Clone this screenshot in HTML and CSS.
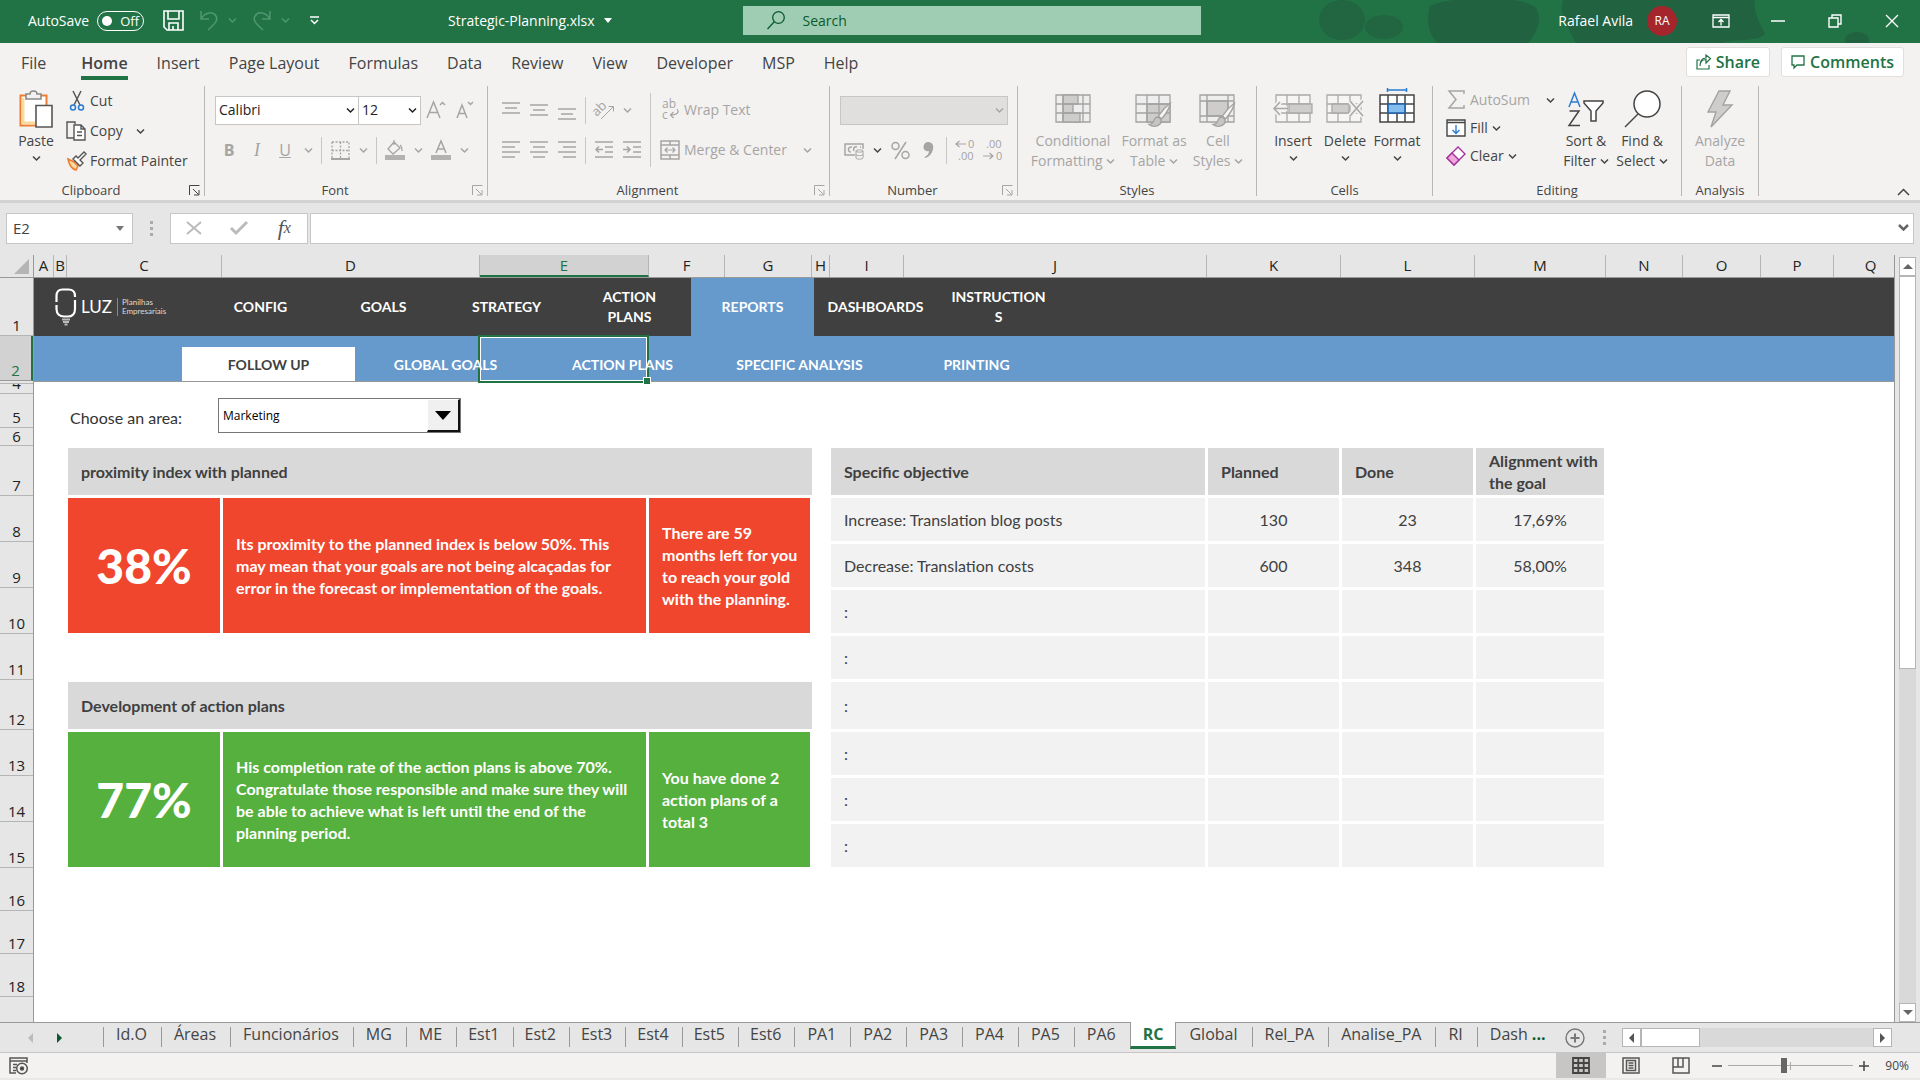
FILE: index.html
```html
<!doctype html>
<html lang="en">
<head>
<meta charset="utf-8">
<title>Strategic-Planning.xlsx</title>
<link rel="stylesheet" href="styles.css">
</head>

<body>
<svg class="defs">
	<symbol id="chev" viewBox="0 0 9 9"><path d="M1 2.500l3.500 3.500L8 2.500" fill="none" stroke="currentColor" stroke-width="1.500"/></symbol>
	<symbol id="launch" viewBox="0 0 11 11"><path d="M.5 10V.5H10.500M4 4l5.500 5.500M10 5v5H5" fill="none" stroke="currentColor"/></symbol>
	<symbol id="brush" viewBox="0 0 24 26"><path d="M22.500 1c-4 3-9.500 9-12 13l3 3C17 13 21.500 6 22.500 1z" fill="#f6f5f4" stroke="#a3a2a1" stroke-width="1.300"/><path d="M10 15c-4 0-4 4-5.500 6-1 1.300-2.500 1.500-3.500 1.500 3 2.500 8.500 2.500 11-.5 1.500-1.500 1.500-3.500.500-5z" fill="#c6c5c3" stroke="#a3a2a1"/></symbol>
</svg>

<header class="title">
	<svg class="art" viewBox="0 0 640 43"><g fill="#216641"><ellipse cx="62" cy="20" rx="23" ry="20"/><ellipse cx="104" cy="27" rx="19" ry="12"/></g><g fill="#216240"><path d="M150 6C170-4 240-6 256 8c8 14-2 28-8 35h-90c-10-8-12-24-8-37z"/><path d="M283 0h192c-2 12 4 22 10 34-8 8-30 5-44 9H296c-6-12-18-30-13-43z"/><ellipse cx="577" cy="40" rx="12" ry="8"/></g></svg>
	<div class="quick">
		<span>AutoSave</span>
		<button class="toggle"><i></i>Off</button>
		<button><svg width="21" height="21" viewBox="0 0 21 21" fill="none" stroke="#fff" stroke-width="1.600"><path d="M1 1h19v19H4l-3-3zM5 1v8h11V1M6 20v-7h9v7M10 16v4"/></svg></button>
		<button class="faint"><svg width="20" height="21" viewBox="0 0 20 21" fill="none" stroke="currentColor" stroke-width="1.500"><path d="M2 1v8h8M2 9C6 2 14 1 17 6c3 5-3 9-8 14"/></svg></button>
		<svg class="chev faint"><use href="#chev"/></svg>
		<button class="faint"><svg width="20" height="21" viewBox="0 0 20 21" fill="none" stroke="currentColor" stroke-width="1.500"><path d="M18 1v8h-8M18 9C14 2 6 1 3 6c-3 5 3 9 8 14"/></svg></button>
		<svg class="chev faint"><use href="#chev"/></svg>
		<button class="more"><svg width="11" height="9" viewBox="0 0 11 9" fill="none" stroke="#fff" stroke-width="1.500"><path d="M1 1h9M2 4l3.500 3.500L9 4"/></svg></button>
	</div>
	<button class="fname">Strategic-Planning.xlsx<i class="down"></i></button>
	<label class="search"><svg width="18" height="19" viewBox="0 0 18 19" fill="none" stroke="#0b5a2e" stroke-width="1.300"><circle cx="11.500" cy="6.500" r="5.800"/><path d="M7.500 10.500L.5 18"/></svg><input type="text" placeholder="Search"></label>
	<div class="user"><span>Rafael Avila</span><b>RA</b></div>
	<div class="win">
		<button><svg width="18" height="14" viewBox="0 0 18 14" fill="none" stroke="#fff" stroke-width="1.300"><path d="M1 1h16v12H1zM1 3.500h16M9 11.500V6M6.500 8L9 5.500 11.500 8"/></svg></button>
		<button><svg width="14" height="14" viewBox="0 0 14 14" stroke="#fff" stroke-width="1.500"><path d="M0 7h14"/></svg></button>
		<button><svg width="14" height="14" viewBox="0 0 14 14" fill="none" stroke="#fff" stroke-width="1.400"><path d="M1 4h9v9H1zM4 4V1h9v9h-3"/></svg></button>
		<button><svg width="14" height="14" viewBox="0 0 14 14" stroke="#fff" stroke-width="1.400"><path d="M1 1l12 12M13 1L1 13"/></svg></button>
	</div>
</header>

<nav class="menu">
	<a href="#" class="file">File</a>
	<a href="#" class="on">Home</a>
	<a href="#">Insert</a>
	<a href="#">Page Layout</a>
	<a href="#">Formulas</a>
	<a href="#">Data</a>
	<a href="#">Review</a>
	<a href="#">View</a>
	<a href="#">Developer</a>
	<a href="#">MSP</a>
	<a href="#">Help</a>
	<div class="menu-btn">
		<button><svg width="15" height="16" viewBox="0 0 15 16" fill="none" stroke="#217346" stroke-width="1.200"><path d="M4 6H1v9h12v-4M4 12c0-5 3-6.500 6-6.500V9l4.500-4.500L10 1v3C6 4 4 7 4 12z"/></svg>Share</button>
		<button><svg width="14" height="14" viewBox="0 0 14 14" fill="none" stroke="#217346" stroke-width="1.300"><path d="M1 1h12v9H6l-3 3v-3H1z"/></svg>Comments</button>
	</div>
</nav>

<div class="ribbon">
	<section class="group g-clip">
		<div class="tools">
			<button class="big"><svg width="34" height="38" viewBox="0 0 34 38" fill="none"><path d="M1.500 5.500h26v30h-26z" fill="#fff" stroke="#ed7d31" stroke-width="2"/><path d="M4 8v25h21" stroke="#fbd9a0" stroke-width="3"/><path d="M7 9V4h4c0-4 7-4 7 0h4v5z" fill="#f3f2f1" stroke="#8a8a8a" stroke-width="1.600"/><path d="M17 15.500h16v21.500H17z" fill="#fff" stroke="#555" stroke-width="1.600"/></svg><span>Paste</span><svg class="chev"><use href="#chev"/></svg></button>
			<div class="lines">
				<button><svg width="20" height="20" viewBox="0 0 20 20" fill="none"><path d="M4 0l7 14M12 0L5 14" stroke="#555" stroke-width="1.500"/><circle cx="4" cy="16.500" r="2.500" stroke="#2b7cd3" stroke-width="1.500"/><circle cx="12" cy="16.500" r="2.500" stroke="#2b7cd3" stroke-width="1.500"/></svg>Cut</button>
				<button><svg width="20" height="20" viewBox="0 0 20 20" fill="none" stroke="#555" stroke-width="1.400"><path d="M6 17H-2V1h8v2"/><path d="M5 4h7l4 4v11H5zM12 4v4h4M8 11h5M8 14.500h5" fill="#fff"/></svg>Copy<svg class="chev wide"><use href="#chev"/></svg></button>
				<button><svg width="20" height="20" viewBox="0 0 20 20" fill="none"><path d="M-1 8l6 3 4 4-2 4C3 18 0 13-1 8z" fill="#fbd9a0" stroke="#ed7d31" stroke-width="1.600"/><path d="M4 8l7 7 3-3-3-3 6-6-2-2-6 6-2-2z" fill="#fff" stroke="#555" stroke-width="1.400"/></svg>Format Painter</button>
			</div>
		</div>
		<footer class="more">Clipboard<svg class="launch"><use href="#launch"/></svg></footer>
	</section>

	<section class="group g-font off">
		<div class="tools stack">
			<div class="row">
				<label class="box face"><select><option>Calibri</option></select><svg class="chev"><use href="#chev"/></svg></label>
				<label class="box size"><select><option>12</option></select><svg class="chev"><use href="#chev"/></svg></label>
				<button class="w30"><svg width="20" height="20" viewBox="0 0 20 20" fill="none" stroke="currentColor" stroke-width="1.500"><path d="M1 18L7.500 2 14 18M3 12.500h9M14 5l2.500-2.500L19 5"/></svg></button>
				<button class="w28"><svg width="18" height="20" viewBox="0 0 18 20" fill="none" stroke="currentColor" stroke-width="1.500"><path d="M1 18L6 5l5 13M3 13.500h6M12 2l2.500 2.500L17 2"/></svg></button>
			</div>
			<div class="row">
				<button class="w28 b">B</button>
				<button class="w28 i">I</button>
				<button class="w28 u">U</button>
				<button class="w18"><svg class="chev"><use href="#chev"/></svg></button>
				<i class="sep"></i>
				<button class="w28"><svg width="19" height="19" viewBox="0 0 19 19" fill="none" stroke="currentColor" stroke-width="1.300"><path d="M1 1h17v17M1 1v17M9.500 1v16M1 9.500h17" stroke-dasharray="2 1.500"/><path d="M0 18h19" stroke-width="2"/></svg></button>
				<button class="w18"><svg class="chev"><use href="#chev"/></svg></button>
				<i class="sep"></i>
				<button class="w28"><svg width="20" height="20" viewBox="0 0 20 20" fill="none" stroke="currentColor" stroke-width="1.300"><path d="M9 2l6 6-7 6-5-5zM9 5V0M15 5c2 1 2 4 2 6"/><path d="M0 17.500h20" stroke="#b3b2b1" stroke-width="5"/></svg></button>
				<button class="w18"><svg class="chev"><use href="#chev"/></svg></button>
				<button class="w28"><svg width="20" height="20" viewBox="0 0 20 20" fill="none" stroke="currentColor" stroke-width="1.500"><path d="M5 13l5-12 5 12M6.500 9h7"/><path d="M0 17.500h20" stroke="#b3b2b1" stroke-width="5"/></svg></button>
				<button class="w18"><svg class="chev"><use href="#chev"/></svg></button>
			</div>
		</div>
		<footer class="more">Font<svg class="launch"><use href="#launch"/></svg></footer>
	</section>

	<section class="group g-align off">
		<div class="tools">
			<div class="stack">
				<div class="row">
					<button class="w28"><svg width="18" height="20" viewBox="0 0 18 20" stroke="currentColor" stroke-width="1.500"><path d="M0 3h18M3 8h12M0 13h18"/></svg></button>
					<button class="w28"><svg width="18" height="20" viewBox="0 0 18 20" stroke="currentColor" stroke-width="1.500"><path d="M0 5h18M3 10h12M0 15h18"/></svg></button>
					<button class="w28"><svg width="18" height="20" viewBox="0 0 18 20" stroke="currentColor" stroke-width="1.500"><path d="M0 9h18M3 14h12M0 19h18"/></svg></button>
					<i class="sep"></i>
					<button class="w28"><svg width="20" height="20" viewBox="0 0 20 20"><text x="-1" y="12" font-size="13" fill="currentColor" transform="rotate(-45 7 10)">ab</text><path d="M7 19L19 7M14.500 6.500H19.500V11.500" fill="none" stroke="currentColor"/></svg></button>
					<button class="w18"><svg class="chev"><use href="#chev"/></svg></button>
				</div>
				<div class="row">
					<button class="w28"><svg width="18" height="18" viewBox="0 0 18 18" stroke="currentColor" stroke-width="1.500"><path d="M0 1h18M0 6h13M0 11h18M0 16h13"/></svg></button>
					<button class="w28"><svg width="18" height="18" viewBox="0 0 18 18" stroke="currentColor" stroke-width="1.500"><path d="M0 1h18M3 6h12M0 11h18M3 16h12"/></svg></button>
					<button class="w28"><svg width="18" height="18" viewBox="0 0 18 18" stroke="currentColor" stroke-width="1.500"><path d="M0 1h18M5 6h13M0 11h18M5 16h13"/></svg></button>
					<i class="sep"></i>
					<button class="w28"><svg width="18" height="18" viewBox="0 0 18 18" fill="none" stroke="currentColor" stroke-width="1.500"><path d="M0 1h18M10 6h8M10 11h8M0 16h18M8 8.500H1M4 5.500l-3 3 3 3"/></svg></button>
					<button class="w28"><svg width="18" height="18" viewBox="0 0 18 18" fill="none" stroke="currentColor" stroke-width="1.500"><path d="M0 1h18M10 6h8M10 11h8M0 16h18M0 8.500h7M4 5.500l3 3-3 3"/></svg></button>
				</div>
			</div>
			<i class="sep tall"></i>
			<div class="stack wrap">
				<button class="line"><svg width="20" height="20" viewBox="0 0 20 20" font-size="12" fill="currentColor"><text x="2" y="8">ab</text><text x="2" y="19">c</text><path d="M17 9c3 4-1 6-6 6M13.500 12l-3 3 3 3" fill="none" stroke="currentColor" stroke-width="1.200"/></svg>Wrap Text</button>
				<button class="line"><svg width="20" height="20" viewBox="0 0 20 20" fill="none" stroke="currentColor" stroke-width="1.500"><path d="M1 1h18v18H1zM1 5h18M1 15h18M10 1v4M10 15v4"/><path d="M5 10h10M7.500 7.500L5 10l2.500 2.500M12.500 7.500L15 10l-2.500 2.500" stroke-width="1.200"/></svg>Merge &amp; Center<svg class="chev wide"><use href="#chev"/></svg></button>
			</div>
		</div>
		<footer class="more">Alignment<svg class="launch"><use href="#launch"/></svg></footer>
	</section>

	<section class="group g-num off">
		<div class="tools stack">
			<div class="row"><label class="box numfmt"><select disabled><option></option></select><svg class="chev"><use href="#chev"/></svg></label></div>
			<div class="row">
				<button class="w28"><svg width="20" height="20" viewBox="0 0 20 20" fill="none" stroke="currentColor" stroke-width="1.500"><path d="M11 15H1V4h18v5M8 7c-4-1-5 5-1 5M13 7c-3-1-4 2-3 4M16 7h1"/><path d="M12 11v7c0 1.500 7 1.500 7 0v-7c0-1.500-7-1.500-7 0c0 1.500 7 1.500 7 0M12 14.500c0 1.500 7 1.500 7 0" fill="#f3f2f1" stroke-width="1"/></svg></button>
				<button class="w18 dark"><svg class="chev"><use href="#chev"/></svg></button>
				<button class="w28 pct"><svg width="19" height="19" viewBox="0 0 19 19" fill="none" stroke="currentColor" stroke-width="1.500"><circle cx="4.500" cy="5" r="3.500"/><circle cx="14.500" cy="14" r="3.500"/><path d="M15 1L4 18"/></svg></button>
				<button class="w28"><svg width="11" height="17" viewBox="0 0 11 17"><path d="M5 0c4 0 6 3 5 7-1 5-4 8-8 9l-.5-1c3-1.500 4.500-3.500 4.500-6C2.500 10 .500 7.500.500 5 .500 2 2.500 0 5 0z" fill="currentColor"/></svg></button>
				<i class="sep"></i>
				<button class="w28"><svg width="20" height="20" viewBox="0 0 20 20"><g font-size="11" fill="currentColor"><text x="13" y="8">0</text><text x="3" y="20">.00</text></g><path d="M11 4H1M4.500 1L1 4l3.500 3" fill="none" stroke="currentColor" stroke-width="1.200"/></svg></button>
				<button class="w28"><svg width="20" height="20" viewBox="0 0 20 20"><g font-size="11" fill="currentColor"><text x="3" y="8">.00</text><text x="13" y="20">0</text></g><path d="M0 16h10M6.500 13l3.500 3-3.500 3" fill="none" stroke="currentColor" stroke-width="1.200"/></svg></button>
			</div>
		</div>
		<footer class="more">Number<svg class="launch"><use href="#launch"/></svg></footer>
	</section>

	<section class="group g-style off">
		<div class="tools">
			<button class="big w88"><svg width="36" height="38" viewBox="0 0 36 38" fill="none" stroke="#a3a2a1" stroke-width="1.300"><path d="M1 5h34v27H1z" fill="#eee"/><path d="M8 5h15v9H8zM8 14h10v9H8zM8 23h17v9H8z" fill="#cfcdcb"/><path d="M1 14h34M1 23h34M8 5v27M28 5v27"/></svg><span>Conditional<br>Formatting <svg class="chev"><use href="#chev"/></svg></span></button>
			<button class="big w74"><svg width="40" height="38" viewBox="0 0 40 38" fill="none" stroke="#a3a2a1" stroke-width="1.300"><path d="M2 5h34v27H2z" fill="#eee"/><path d="M13 14h23v18H13z" fill="#cfcdcb"/><path d="M2 14h34M2 23h34M13 5v27M25 5v27"/><use href="#brush" x="13" y="12" width="26" height="26"/></svg><span>Format as<br>Table <svg class="chev"><use href="#chev"/></svg></span></button>
			<button class="big w54"><svg width="40" height="38" viewBox="0 0 40 38" fill="none" stroke="#a3a2a1" stroke-width="1.300"><path d="M2 5h34v27H2z" fill="#eee"/><path d="M9 11h21v15H9z" fill="#cfcdcb"/><path d="M2 11h34M2 26h34M9 5v27M30 5v27"/><use href="#brush" x="13" y="12" width="26" height="26"/></svg><span>Cell<br>Styles <svg class="chev"><use href="#chev"/></svg></span></button>
		</div>
		<footer>Styles</footer>
	</section>

	<section class="group g-cells">
		<div class="tools">
			<button class="big w52"><svg width="40" height="38" viewBox="0 0 40 38" fill="none" stroke="#aaa9a8" stroke-width="1.300"><path d="M3 5h34v27H3zM14 5v27M26 5v27M3 14h34M3 23h34" fill="#f6f5f4"/><path d="M16 14h23v9H16z" fill="#cfcdcb"/><path d="M1 18.500h13M7 12l-6 6.500L7 25" stroke="#f3f2f1" stroke-width="5"/><path d="M1 18.500h14M7 12l-6 6.500L7 25" stroke-width="1.600"/></svg><span>Insert</span><svg class="chev"><use href="#chev"/></svg></button>
			<button class="big w52"><svg width="38" height="38" viewBox="0 0 38 38" fill="none" stroke="#aaa9a8" stroke-width="1.300"><path d="M1 5h34v27H1zM12 5v27M24 5v27M1 14h34M1 23h34" fill="#f6f5f4"/><path d="M6 14h17v9H6z" fill="#cfcdcb"/><path d="M24 11l13 15M37 11L24 26" stroke="#f3f2f1" stroke-width="5"/><path d="M24 11l13 15M37 11L24 26" stroke-width="1.600"/></svg><span>Delete</span><svg class="chev"><use href="#chev"/></svg></button>
			<button class="big w52"><svg width="36" height="38" viewBox="0 0 36 38" fill="none"><path d="M1 5h34v27H1zM9 5v27M26 5v27M1 14h34M1 23h34M18 5v27" fill="#fff" stroke="#444" stroke-width="1.500"/><path d="M9 14h17v9H9z" fill="#83beec" stroke="#1e62b0" stroke-width="1.600"/><path d="M8.500 0h19M8.500-2v4M27.500-2v4" stroke="#2b7cd3" stroke-width="1.500"/></svg><span>Format</span><svg class="chev"><use href="#chev"/></svg></button>
		</div>
		<footer>Cells</footer>
	</section>

	<section class="group g-edit">
		<div class="tools">
			<div class="lines tight">
				<button class="dis"><svg width="20" height="20" viewBox="0 0 20 20" fill="none" stroke="currentColor" stroke-width="1.500"><path d="M18 4V1H3l7 8.500L3 18h15v-3"/></svg>AutoSum<svg class="chev wide dark"><use href="#chev"/></svg></button>
				<button><svg width="20" height="18" viewBox="0 0 20 18" fill="none" stroke="#444" stroke-width="1.400"><path d="M1 1h18v16H1zM1 3.500h18" fill="#fff"/><path d="M10 6v8M6.500 11l3.500 3.500 3.500-3.500" stroke="#2b7cd3"/></svg>Fill <svg class="chev"><use href="#chev"/></svg></button>
				<button><svg width="20" height="20" viewBox="0 0 20 20" fill="none" stroke="#a3309c" stroke-width="1.400"><path d="M12 1l7 7L8 19l-7-7z" fill="#fff"/><path d="M6 7l7 7-5 5-7-7z" fill="#f0a8dc"/></svg>Clear <svg class="chev"><use href="#chev"/></svg></button>
			</div>
			<button class="big w56"><svg width="38" height="38" viewBox="0 0 38 38" fill="none" stroke="#444" stroke-width="1.500"><path d="M2 17L7.500 3 13 17M4 12h7" stroke="#2b7cd3"/><path d="M2.500 21h9.500L2 35.500h11"/><path d="M17 11h19v2l-7 8v10h-5V21l-7-8z" fill="#fff"/></svg><span>Sort &amp;<br>Filter <svg class="chev"><use href="#chev"/></svg></span></button>
			<button class="big w56"><svg width="38" height="38" viewBox="0 0 38 38" fill="none" stroke="#444" stroke-width="1.500"><circle cx="24" cy="14" r="13" fill="#fff"/><path d="M15 24L2 37"/></svg><span>Find &amp;<br>Select <svg class="chev"><use href="#chev"/></svg></span></button>
		</div>
		<footer>Editing</footer>
	</section>

	<section class="group g-ana off">
		<div class="tools">
			<button class="big"><svg width="28" height="38" viewBox="0 0 28 38"><path d="M13 1h11l-7 14h9L5 37l5-15H2z" fill="#cfcdcb" stroke="#a3a2a1" stroke-width="1.400"/></svg><span>Analyze<br>Data</span></button>
		</div>
		<footer>Analysis</footer>
	</section>
	<button class="collapse"><svg width="13" height="8" viewBox="0 0 13 8" fill="none" stroke="#444" stroke-width="1.500"><path d="M1 7l5.500-5.500L12 7"/></svg></button>
</div>

<div class="fbar">
	<label class="namebox"><input type="text" value="E2" aria-label="Name box"><i class="down"></i></label>
	<i class="grip"></i>
	<div class="fx">
		<button><svg width="16" height="14" viewBox="0 0 16 14" stroke="#bcbbba" stroke-width="2"><path d="M1 1l14 12M15 1L1 13"/></svg></button>
		<button><svg width="18" height="14" viewBox="0 0 18 14" fill="none" stroke="#bcbbba" stroke-width="3"><path d="M1 7l5 5L17 1"/></svg></button>
		<button class="fn"><i>f</i><small>x</small></button>
	</div>
	<label class="formula"><input type="text" aria-label="Formula"><svg width="11" height="8" viewBox="0 0 11 8" fill="none" stroke="#666" stroke-width="2.500"><path d="M1 1l4.500 4.500L10 1"/></svg></label>
</div>

<main class="work">
	<div class="rows">
		<div class="corner"><i></i></div>
		<div class="r1">1</div>
		<div class="r2 sel">2</div>
		<div class="r3"></div>
		<div class="r4"><span>4</span></div>
		<div class="r5">5</div>
		<div class="r6">6</div>
		<div class="r7">7</div>
		<div>8</div>
		<div>9</div>
		<div>10</div>
		<div>11</div>
		<div class="r7">12</div>
		<div>13</div>
		<div>14</div>
		<div>15</div>
		<div class="r16">16</div>
		<div class="r16">17</div>
		<div class="r16">18</div>
	</div>
	<div class="sheet">
		<div class="cols">
			<span class="ca">A</span><span class="cb">B</span><span class="cc">C</span><span class="cd">D</span><span class="ce sel">E</span><span class="cf">F</span><span class="cg">G</span><span class="ch">H</span><span class="ci">I</span><span class="cj">J</span><span class="ck">K</span><span class="ck">L</span><span class="cm">M</span><span class="cn">N</span><span class="co">O</span><span class="cp">P</span><span class="cq">Q</span>
		</div>
		<div class="cells">
			<nav class="top">
				<div class="logo">
					<svg width="22" height="38" viewBox="0 0 22 38" fill="none" stroke="#fff" stroke-width="2.200"><path d="M1.500 14V8c0-4 2-6.500 6-6.500h6c4 0 6.500 2.500 6.500 6.500v1M20 12v9c0 5-3 7.500-7 7.500H9c-4 0-7.500-2.500-7.500-7.500v-4"/><path d="M7 31.500h8M8 34h6M9.500 36.500h3" stroke="#bbb"/></svg>
					<b>LUZ</b>
					<small>Planilhas<br>Empresariais</small>
				</div>
				<a href="#">CONFIG</a>
				<a href="#">GOALS</a>
				<a href="#">STRATEGY</a>
				<a href="#">ACTION PLANS</a>
				<a href="#" class="on">REPORTS</a>
				<a href="#">DASHBOARDS</a>
				<a href="#">INSTRUCTIONS</a>
			</nav>
			<nav class="sub">
				<i class="cursor"></i>
				<a href="#" class="on">FOLLOW UP</a>
				<a href="#">GLOBAL GOALS</a>
				<a href="#">ACTION PLANS</a>
				<a href="#">SPECIFIC ANALYSIS</a>
				<a href="#">PRINTING</a>
			</nav>
			<div class="area">
				<label for="area">Choose an area:</label>
				<div class="combo"><select id="area"><option>Marketing</option></select><i></i></div>
			</div>
			<div class="report">
				<div class="left">
					<section class="card red">
						<h2>proximity index with planned</h2>
						<div class="tiles">
							<strong>38%</strong>
							<p>Its proximity to the planned index is below 50%. This may mean that your goals are not being alcaçadas for error in the forecast or implementation of the goals.</p>
							<p>There are 59 months left for you to reach your gold with the planning.</p>
						</div>
					</section>
					<section class="card green">
						<h2>Development of action plans</h2>
						<div class="tiles">
							<strong>77%</strong>
							<p>His completion rate of the action plans is above 70%. Congratulate those responsible and make sure they will be able to achieve what is left until the end of the planning period.</p>
							<p>You have done 2 action plans of a total 3</p>
						</div>
					</section>
				</div>
				<table>
					<thead>
						<tr><th class="obj">Specific objective</th><th class="num">Planned</th><th class="num">Done</th><th class="ali">Alignment with the goal</th></tr>
					</thead>
					<tbody>
						<tr><td>Increase: Translation blog posts</td><td>130</td><td>23</td><td>17,69%</td></tr>
						<tr><td>Decrease: Translation costs</td><td>600</td><td>348</td><td>58,00%</td></tr>
						<tr><td>:</td><td></td><td></td><td></td></tr>
						<tr><td>:</td><td></td><td></td><td></td></tr>
						<tr class="high"><td>:</td><td></td><td></td><td></td></tr>
						<tr><td>:</td><td></td><td></td><td></td></tr>
						<tr><td>:</td><td></td><td></td><td></td></tr>
						<tr><td>:</td><td></td><td></td><td></td></tr>
					</tbody>
				</table>
			</div>
		</div>
	</div>
	<div class="vscroll">
		<button><i class="up"></i></button>
		<div class="track"><i></i></div>
		<button><i class="down"></i></button>
	</div>
</main>

<div class="tabs">
	<div class="arrows"><i class="prev"></i><i class="next"></i></div>
	<a href="#">Id.O</a>
	<a href="#">Áreas</a>
	<a href="#">Funcionários</a>
	<a href="#">MG</a>
	<a href="#">ME</a>
	<a href="#" class="est">Est1</a>
	<a href="#" class="est">Est2</a>
	<a href="#" class="est">Est3</a>
	<a href="#" class="est">Est4</a>
	<a href="#" class="est">Est5</a>
	<a href="#" class="est">Est6</a>
	<a href="#">PA1</a>
	<a href="#">PA2</a>
	<a href="#">PA3</a>
	<a href="#">PA4</a>
	<a href="#">PA5</a>
	<a href="#">PA6</a>
	<a href="#" class="on">RC</a>
	<a href="#" class="first">Global</a>
	<a href="#">Rel_PA</a>
	<a href="#">Analise_PA</a>
	<a href="#">RI</a>
	<a href="#" class="last">Dash <b>...</b></a>
	<div class="tabs-end">
		<button class="add"><svg width="20" height="20" viewBox="0 0 20 20" fill="none" stroke="#777" stroke-width="1.400"><circle cx="10" cy="10" r="9"/><path d="M10 5.500v9M5.500 10h9" stroke-width="2"/></svg></button>
		<i class="grip"></i>
		<div class="hscroll">
			<button><i class="prev"></i></button>
			<div class="track"><i></i></div>
			<button><i class="next"></i></button>
		</div>
	</div>
</div>

<footer class="status">
	<button class="macro"><svg width="20" height="18" viewBox="0 0 20 18" fill="none" stroke="#555" stroke-width="1.500"><path d="M7 16H1V1h17v5M1 4h17M4 7.500h4M4 10.500h3M4 13.500h3"/><circle cx="13" cy="11.500" r="5.300"/><circle cx="13" cy="11.500" r="1.500" fill="#333"/></svg></button>
	<div class="views">
		<button class="on"><svg width="18" height="17" viewBox="0 0 18 17" fill="none" stroke="#444" stroke-width="1.800"><path d="M1 1h16v15H1zM1 6h16M1 11h16M6.300 1v15M11.700 1v15"/></svg></button>
		<button><svg width="18" height="17" viewBox="0 0 18 17" fill="none" stroke="#555" stroke-width="1.500"><path d="M1 1h16v15H1zM4.500 3.500h9v10h-9zM6.500 6h5M6.500 8.500h5M6.500 11h5"/></svg></button>
		<button><svg width="18" height="17" viewBox="0 0 18 17" fill="none" stroke="#555" stroke-width="1.500"><path d="M1 1h16v15H1zM1 10h10V1M6 1v9"/></svg></button>
	</div>
	<div class="zoom">
		<button><svg width="10" height="10" viewBox="0 0 10 10" stroke="#444" stroke-width="1.500"><path d="M0 5h10"/></svg></button>
		<input type="range" min="10" max="190" value="89" aria-label="Zoom">
		<button><svg width="10" height="10" viewBox="0 0 10 10" stroke="#444" stroke-width="1.500"><path d="M0 5h10M5 0v10"/></svg></button>
		<span>90%</span>
	</div>
</footer>
</body>
</html>
```
FILE: styles.css
```css
*{padding: 0; margin:0; box-sizing: border-box;}
html,body{height:100%;}
body{display: flex; flex-direction: column; background:#e6e6e6; color:#444; font:14px/20px "Open Sans","Noto Sans",sans-serif; overflow: hidden;}
a{color:inherit; text-decoration: none;}
button{border:0; background:none; font:inherit; color:inherit; display: flex; align-items: center; justify-content: center;}
input,select{border:0; background:none; font:inherit; color:inherit; outline:0; appearance:none; min-width:0;}
svg{flex:none; overflow: visible;}
.defs{position: absolute; width:0; height:0;}
.chev{width:9px; height:9px;}

/* triangles */
.down,.up,.prev,.next{width:0; height:0; border:5px solid transparent; flex:none;}
.down{border-top-color:currentColor; border-bottom:0;}
.up{border-bottom-color:currentColor; border-top:0;}
.prev{border-right-color:currentColor; border-left:0;}
.next{border-left-color:currentColor; border-right:0;}

/* title bar */
.title{position: relative; flex:none; display: flex; align-items: center; height:43px; padding-bottom:2px; background:#217346; color:#fff;}
.title>*{z-index:1;}
.title .art{position: absolute; right:0; top:0; z-index:0; width:640px; height:43px; overflow: hidden;}
.quick{display: flex; align-items: center; width:448px; padding-left:28px;}
.toggle{width:47px; height:20px; margin:0 19px 0 8px; border:1px solid #fff; border-radius:10px; font-size:13px; gap:8px;}
.toggle i{width:10px; height:10px; border-radius:50%; background:#fff;}
.quick .faint{color:#4f9671;}
.quick button.faint{margin-left:15px;}
.quick svg.faint{margin-left:9px;}
.quick .more{margin-left:19px;}
.fname{gap:9px;}
.fname .down{border-width:4px; border-top-width:5px; border-bottom:0;}
.search{display: flex; align-items: center; width:458px; height:29px; margin-left:131px; padding-left:24px; background:#9fcdb3; color:#0b5a2e; gap:18px;}
.search input::placeholder{color:#0b5a2e; opacity:1;}
.user{display: flex; align-items: center; margin-left:auto; gap:14px;}
.user b{width:30px; height:30px; border-radius:50%; background:#a4262c; font-weight:400; font-size:12px; line-height:30px; text-align: center;}
.win{display: flex; margin-left:15px;}
.win button{width:57px; height:40px;}

/* menu */
.menu{flex:none; display: flex; align-items: center; height:42px; padding:0 16px 4px 21px; background:#f3f2f1; gap:29px; font-size:16px;}
.menu a{line-height:26px; padding:5px 0 4px; height:35px;}
.menu .file{margin-right:6px;}
.menu .on{font-weight:600; border-bottom:4px solid #217346;}
.menu-btn{display: flex; margin-left:auto; gap:11px;}
.menu-btn button{height:30px; padding:0 9px; gap:5px; background:#fff; border:1px solid #e1dfdd; border-radius:3px; color:#217346; font-weight:600;}

/* ribbon */
.ribbon{flex:none; display: flex; height:118px; padding:1px 0 4px; background:#f3f2f1; border-bottom:3px solid #d4d2d0;}
.group{flex:none; display: flex; flex-direction: column; justify-content: space-between; border-right:1px solid #b9b7b5;}
.group footer{position: relative; height:16px; line-height:20px; font-size:13px; text-align: center;}
.group .more{padding-right:22px;}
.launch{position: absolute; right:4px; top:5px; width:11px; height:11px;}
.off .tools,.off .launch,.dis{color:#a6a5a4;}
.dark{color:#444;}
.tools{display: flex;}
.stack{display: flex; flex-direction: column; padding-top:4px;}
.row,.line{display: flex; align-items: center; justify-content: flex-start; height:40px;}
.big{flex-direction: column; justify-content: flex-start; padding-top:4px;}
.big span{margin-top:3px; white-space: nowrap;}
.big>.chev{margin-top:3px;}
.lines button{justify-content: flex-start; height:30px; gap:1px;}
.chev.wide{margin-left:12px;}
.w18{width:18px;}
.w28{width:28px;}
.w30{width:30px;}
.w52{width:52px;}
.w54{width:54px;}
.w56{width:56px;}
.w74{width:74px;}
.w88{width:88px;}
.sep{width:1px; height:27px; margin:0 4px; background:#c8c6c4;}
.sep.tall{height:74px; margin:7px 9px 0 4px;}
.b{font-weight:700; font-size:16px;}
.i{font-family:"Liberation Serif",serif; font-style: italic; font-size:18px;}
.u{text-decoration: underline; font-size:16px;}
.box{display: flex; align-items: center; height:29px; padding:0 3px; border:1px solid #c8c6c4; background:#fff; color:#222;}
.box select{flex:1;}
.face{width:144px;}
.size{width:62px; border-left:0;}
.numfmt{width:168px; background:#e1dfdd; color:#a6a5a4;}

.g-clip{width:205px;}
.g-clip .tools{padding-left:17px;}
.g-clip .tools .big{width:38px;}
.g-clip .lines{margin-left:14px;}
.g-font{width:283px;}
.g-font .tools{padding-left:10px;}
.g-align{width:342px;}
.g-align .tools{padding-left:9px;}
.g-align .line{gap:4px;}
.g-num{width:188px;}
.g-num .tools{padding-left:10px;}
.g-style{width:239px;}
.g-style .tools{padding-left:11px;}
.g-cells{width:176px;}
.g-cells .tools{padding-left:10px;}
.g-edit{width:249px;}
.g-edit .tools{padding-left:13px;}
.g-edit .lines{width:112px;}
.g-edit .lines button{height:28px; gap:4px;}
.g-ana{width:77px;}
.g-ana .tools{justify-content: center;}
.g-ana footer{white-space: nowrap;}
.collapse{margin:auto 10px 0 auto;}

/* formula bar */
.fbar{flex:none; display: flex; align-items: center; height:52px; padding:0 6px 2px;}
.fbar>label,.fx{height:31px; background:#fff; border:1px solid #c6c6c6; display: flex; align-items: center;}
.namebox{width:127px; padding:0 8px 0 6px; font-size:15px;}
.namebox input{flex:1;}
.namebox .down{border-width:4px; border-top-width:5px; border-bottom:0; color:#777;}
.grip{width:3px; height:15px; background:repeating-linear-gradient(#aaa 0 3px,transparent 3px 6px);}
.fbar .grip{margin:0 17px;}
.fx{width:138px; margin-right:2px;}
.fx button{flex:1;}
.fn{font-family:"Liberation Serif",serif; font-style: italic; color:#555;}
.fn i{font-size:22px;}
.fn small{font-size:16px;}
.formula{flex:1; padding-right:4px;}
.formula input{flex:1;}

/* sheet */
.work{flex:1; min-height:0; display: flex; border-bottom:1px solid #999;}
.rows{flex:none; width:34px; border-right:1px solid #999; overflow: hidden; color:#222; font-size:15px;}
.rows div{display: flex; align-items: flex-end; justify-content: center; height:46px; line-height:20px; border-bottom:1px solid #b5b5b5;}
.rows .corner{height:23px; justify-content: flex-end; padding:0 4px 3px 0; border-bottom-color:#999;}
.corner i{width:0; height:0; border-left:15px solid transparent; border-bottom:15px solid #b5b5b5;}
.rows .r1{height:58px;}
.rows .r2{height:45px; border-bottom-color:#999;}
.rows .sel{background:#d2d2d2; color:#217346; border-right:2px solid #217346;}
.rows .r3{height:3px;}
.rows .r4{height:10px; overflow: hidden;}
.rows .r5{height:34px;}
.rows .r6{height:18px; line-height:18px;}
.rows .r7{height:50px;}
.rows .r16{height:43px;}
.sheet{flex:1; min-width:0; display: flex; flex-direction: column; overflow: hidden; border-right:1px solid #999;}
.cols{flex:none; display: flex; height:23px; border-bottom:1px solid #999; color:#222; font-size:15px; line-height:20px; text-align: center;}
.cols span{flex:none; border-right:1px solid #b5b5b5;}
.cols .sel{background:#d2d2d2; color:#217346; border-bottom:2px solid #217346;}
.ca{width:20px;} .cb{width:13px;} .cc{width:155px;} .cd{width:258px;} .ce{width:169px;} .cf{width:76px;}
.cg{width:87px;} .ch{width:18px;} .ci{width:74px;} .cj{width:303px;} .ck{width:134px;} .cm{width:131px;}
.cn{width:77px;} .co{width:78px;} .cp{width:73px;} .cq{width:74px;}
.cells{flex:1; min-height:0; background:#fff; overflow: hidden; font-family:Lato,"Noto Sans",sans-serif; font-size:16px; line-height:22px;}
.top{display: flex; height:58px; background:#404040; color:#fff; font-weight:700; font-size:14px; line-height:20px;}
.top a{display: flex; align-items: center; justify-content: center; width:123px; padding:0 13px; text-align: center; word-break: break-word;}
.top .on{background:#6699cc;}
.logo{display: flex; align-items: center; width:165px; padding-left:21px;}
.logo b{margin:0 5px 0 4px; font-size:17px; font-weight:400;}
.logo small{padding-left:4px; border-left:1px solid #888; font-size:8px; font-weight:400; line-height:9px; color:#ddd;}
.sub{position: relative; display: flex; align-items: flex-end; height:46px; padding-left:148px; gap:4px; background:#6699cc; border-bottom:1px solid #999; color:#fff; font-weight:700; font-size:14px;}
.sub a{position: relative; width:173px; height:34px; line-height:36px; text-align: center;}
.sub .on{background:#fff; color:#404040;}
.cursor{position: absolute; left:444px; top:-1px; width:171px; height:48px; border:2px solid #217346; box-shadow:inset 0 0 0 1px #fff;}
.cursor::after{content:""; position: absolute; right:-3px; bottom:-3px; width:6px; height:6px; background:#217346; outline:1px solid #fff;}
.area{display: flex; align-items: center; margin:16px 0 15px 36px; color:#333;}
.area label{width:148px; padding-top:4px;}
.combo{position: relative; display: flex; width:243px; height:35px; border:1px solid #777;}
.combo select{flex:1; padding-left:4px; font:12px "Open Sans",sans-serif; color:#000;}
.combo i{position: absolute; right:0; top:0; width:33px; height:33px; background:#f0f0f0; border:1px solid #fff; border-right:2px solid #111; border-bottom:2px solid #111;}
.combo i::after{content:""; position: absolute; left:7px; top:11px; border:8px solid transparent; border-top:9px solid #000; border-bottom:0;}
.report{display: flex; padding-left:34px; gap:16px; align-items: flex-start;}
.left{flex:none; width:744px;}
.card{margin-bottom:49px;}
.card h2{height:47px; margin-bottom:3px; padding-left:13px; background:#d9d9d9; font-size:16px; line-height:47px; color:#404040;}
.tiles{display: grid; grid-template-columns:152px 423px 161px; gap:3px; height:135px; color:#fff; font-weight:700;}
.tiles>*{display: flex; align-items: center; padding:0 10px 0 13px;}
.tiles strong{justify-content: center; padding:0; font-size:48px;}
.red .tiles>*{background:#f1462e;}
.green .tiles>*{background:#56b03e;}
table{flex:none; width:779px; margin-top:-3px; table-layout: fixed; border-spacing:3px;}
th{height:47px; padding-left:13px; background:#d9d9d9; text-align: left; color:#404040;}
.num{width:131px;}
.ali{width:128px;}
td{height:43px; background:#f2f2f2; text-align: center; color:#404040;}
td:first-child{padding-left:13px; text-align: left;}
.high td{height:47px;}

/* scroll bars */
.vscroll{flex:none; display: flex; flex-direction: column; width:25px; padding:2px 4px 0; color:#666;}
.vscroll button,.hscroll button{flex:none; background:#fff; border:1px solid #b5b5b5;}
.vscroll button{height:19px;}
.vscroll .track{flex:1; background:#d9d9d9;}
.vscroll .track i{display: block; height:54%; background:#fff; border:1px solid #b5b5b5;}

/* sheet tabs */
.tabs{flex:none; display: flex; height:30px; border-bottom:1px solid #c6c6c6; font-size:16px; white-space: nowrap;}
.tabs>a{position: relative; height:26px; padding:0 14px 0 13px; line-height:22px;}
.tabs>.est{padding:0 13px 0 12px;}
.tabs>a::before{content:""; position: absolute; left:0; top:4px; width:1px; height:20px; background:#999;}
.arrows{display: flex; flex:none; align-items: center; width:103px; padding-left:28px; color:#bbb; gap:24px;}
.arrows .next{color:#0b5a2e;}
.tabs>.on{margin-top:-1px; height:27px; padding:0 12px; background:#fff; border:1px solid #999; border-width:0 1px; border-bottom:3px solid #217346; color:#217346; font-weight:700; line-height:24px;}
.tabs .on::before,.tabs .first::before{display: none;}
.tabs b{color:#0b5a2e;}
.tabs>.last{padding-right:0;}
.tabs-end{display: flex; align-items: center; margin-left:auto; padding-right:28px;}
.tabs-end .grip{margin:0 16px 0 18px;}
.hscroll{display: flex; width:270px; height:19px; color:#555;}
.hscroll button{width:19px;}
.hscroll .track{flex:1; background:#d9d9d9;}
.hscroll .track i{display: block; width:59px; height:19px; background:#fff; border:1px solid #b5b5b5;}

/* status bar */
.status{flex:none; display: flex; align-items: center; height:27px; padding:0 11px 0 9px; background:#f3f2f1; border-bottom:2px solid #ebe9e7; font-size:12px;}
.views{display: flex; margin-left:auto;}
.views button{width:50px; height:25px;}
.views .on{background:#c8c6c4;}
.zoom{display: flex; align-items: center; gap:6px; margin-left:6px;}
.zoom input{width:125px; height:18px; background:linear-gradient(#aaa,#aaa) 0 50%/100% 1px no-repeat,linear-gradient(#aaa,#aaa) 50% 50%/1px 8px no-repeat;}
.zoom input::-webkit-slider-thumb{appearance:none; width:6px; height:15px; background:#666;}
.zoom span{margin-left:10px;}
```
